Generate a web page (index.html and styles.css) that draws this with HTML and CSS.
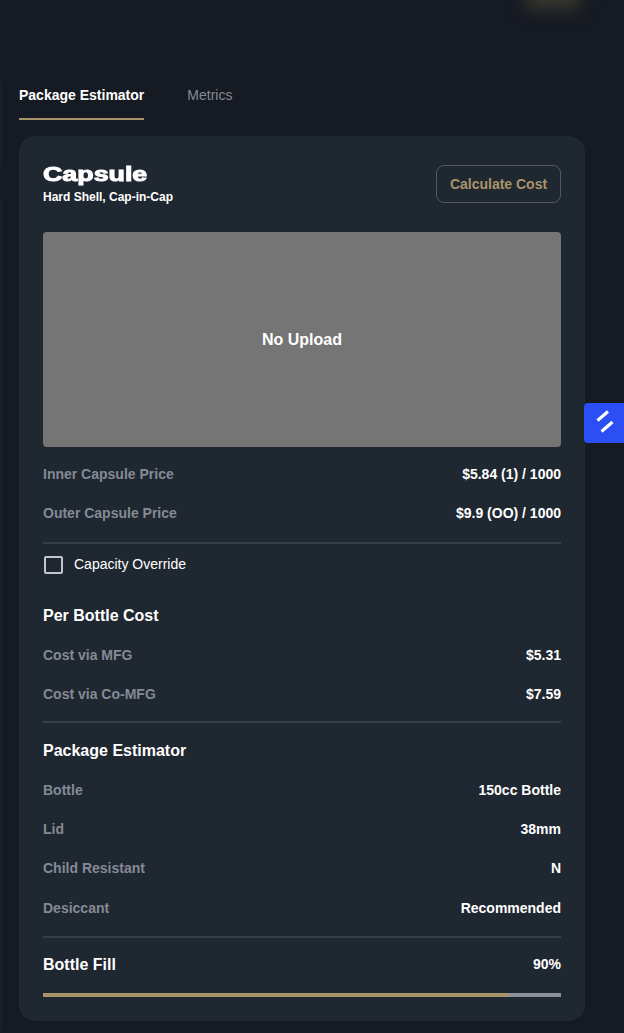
FILE: index.html
```html
<!DOCTYPE html>
<html lang="en">
<head>
    <meta charset="UTF-8">
    <meta name="viewport" content="width=device-width, initial-scale=1.0">
    <title>Package Estimator</title>
    <link rel="stylesheet" href="styles.css">
</head>
<body>
    <!-- Glow and side panels peeking in from the edges -->
    <div class="top-glow"></div>
    <div class="side-panel side-panel-one"></div>
    <div class="side-panel side-panel-two"></div>

    <main class="content">
        <nav class="tabs">
            <span class="tab tab-active">Package Estimator</span>
            <span class="tab">Metrics</span>
        </nav>

        <section class="card">
            <div class="card-header">
                <div>
                    <h1 class="card-title">Capsule</h1>
                    <p class="card-subtitle">Hard Shell, Cap-in-Cap</p>
                </div>
                <button class="calc-button">Calculate Cost</button>
            </div>

            <div class="upload-box">No Upload</div>

            <div class="rows rows-prices">
                <div class="row"><span class="row-label">Inner Capsule Price</span><span class="row-value">$5.84 (1) / 1000</span></div>
                <div class="row"><span class="row-label">Outer Capsule Price</span><span class="row-value">$9.9 (OO) / 1000</span></div>
            </div>

            <hr class="divider">

            <label class="override">
                <span class="checkbox"></span>
                <span class="override-text">Capacity Override</span>
            </label>

            <h2 class="section-title section-first">Per Bottle Cost</h2>
            <div class="rows">
                <div class="row"><span class="row-label">Cost via MFG</span><span class="row-value">$5.31</span></div>
                <div class="row"><span class="row-label">Cost via Co-MFG</span><span class="row-value">$7.59</span></div>
            </div>

            <hr class="divider divider-cost">

            <h2 class="section-title">Package Estimator</h2>
            <div class="rows rows-package">
                <div class="row"><span class="row-label">Bottle</span><span class="row-value">150cc Bottle</span></div>
                <div class="row"><span class="row-label">Lid</span><span class="row-value">38mm</span></div>
                <div class="row"><span class="row-label">Child Resistant</span><span class="row-value">N</span></div>
                <div class="row"><span class="row-label">Desiccant</span><span class="row-value">Recommended</span></div>
            </div>

            <hr class="divider">

            <div class="fill-head">
                <h2 class="section-title fill-title">Bottle Fill</h2>
                <span class="row-value">90%</span>
            </div>
            <div class="fill-track"><div class="fill-bar" style="width: 90%"></div></div>
        </section>
    </main>

    <!-- Floating widget tab -->
    <div class="widget-tab">
        <svg width="40" height="40" viewBox="0 0 40 40" fill="none" stroke="#fff" stroke-width="3">
            <path d="M13.5 17.5 L24 8.5" />
            <path d="M17.5 28.5 L28.5 19" />
        </svg>
    </div>
</body>
</html>
```

FILE: styles.css
```css
* {
    box-sizing: border-box;
}
html, body {
    height: 100%;
}
body {
    margin: 0;
    height: 1033px;
    overflow: hidden;
    background: #161a22;
    color: #fff;
    font-family: "Liberation Sans", Arial, sans-serif;
}
.top-glow {
    position: absolute;
    top: -16px;
    left: 526px;
    width: 54px;
    height: 24px;
    background: #3c3a30;
    filter: blur(9px);
}
.side-panel {
    position: absolute;
    left: -6px;
    width: 8px;
    background: #1c2129;
    border-radius: 4px;
}
.side-panel-one {
    top: 80px;
    height: 88px;
}
.side-panel-two {
    top: 198px;
    height: 835px;
}
.content {
    width: 566px;
    margin-left: 19px;
    padding-top: 78px;
}
.tabs {
    display: flex;
    gap: 43px;
    height: 42px;
}
.tab {
    font-size: 14px;
    line-height: 34px;
    color: #858a94;
}
.tab-active {
    font-weight: 700;
    color: #fff;
    border-bottom: 2px solid #a8946a;
}
.card {
    margin-top: 16px;
    height: 885px;
    padding: 29px 24px 0;
    background: #1f2731;
    border-radius: 16px;
}
.card-header {
    display: flex;
    justify-content: space-between;
    align-items: flex-start;
    height: 67px;
}
.card-title {
    margin: 0;
    font-size: 20px;
    line-height: 18px;
    font-weight: 700;
    -webkit-text-stroke: 1px #fff;
    transform: scaleX(1.34);
    transform-origin: left center;
}
.card-subtitle {
    margin: 6px 0 0;
    font-size: 12px;
    line-height: 16px;
    font-weight: 700;
}
.calc-button {
    width: 125px;
    height: 38px;
    background: transparent;
    border: 1px solid #565a5e;
    border-radius: 8px;
    color: #a8946a;
    font-family: inherit;
    font-size: 14px;
    font-weight: 700;
}
.upload-box {
    display: flex;
    align-items: center;
    justify-content: center;
    height: 215px;
    background: #757575;
    border-radius: 4px;
    font-size: 16px;
    font-weight: 700;
}
.rows {
    display: flex;
    flex-direction: column;
}
.rows-prices {
    margin-top: 7px;
}
.rows-package {
    gap: 0.4px;
}
.row {
    display: flex;
    justify-content: space-between;
    align-items: center;
    height: 39px;
}
.row-label {
    font-size: 14px;
    font-weight: 700;
    color: #858a94;
}
.row-value {
    font-size: 14px;
    font-weight: 700;
    color: #fff;
}
.divider {
    margin: 9px 0 0;
    border: 0;
    height: 2px;
    background: #373e48;
}
.rows-prices + .divider {
    margin-top: 10px;
}
.divider-cost {
    margin-top: 8px;
}
.override {
    display: flex;
    align-items: center;
    gap: 11px;
    height: 41px;
    font-size: 14px;
}
.override-text {
    padding-bottom: 2px;
}
.checkbox {
    width: 19px;
    height: 18px;
    margin-left: 1px;
    border: 2px solid #c2c5ca;
    border-radius: 2px;
}
.section-title {
    margin: 16px 0 7px;
    font-size: 16px;
    line-height: 24px;
    font-weight: 700;
}
.section-first {
    margin-top: 19px;
}
.fill-head {
    display: flex;
    justify-content: space-between;
    align-items: center;
    height: 55px;
    padding-bottom: 4px;
}
.fill-title {
    margin: 0;
    padding-top: 2px;
}
.fill-track {
    height: 4px;
    background: #8a909c;
}
.fill-bar {
    height: 100%;
    background: #a8946a;
}
.widget-tab {
    position: absolute;
    top: 403px;
    left: 584px;
    width: 40px;
    height: 40px;
    background: #2b4ff5;
    border-radius: 4px 0 0 4px;
}
```
